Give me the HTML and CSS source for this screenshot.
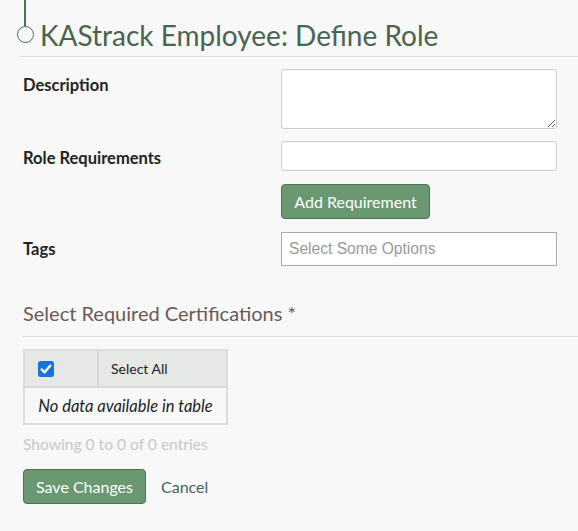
FILE: index.html
```html
<!DOCTYPE html>
<html>
<head>
<meta charset="utf-8">
<link rel="stylesheet" href="styles.css">
</head>
<body>
<div class="page">
  <header class="title-bar">
    <span class="timeline-dot"></span>
    <h1 class="title">KAStrack Employee: Define Role</h1>
  </header>

  <form class="form">
    <div class="row row-desc">
      <label class="label">Description</label>
      <div class="field"><textarea class="textarea"></textarea></div>
    </div>
    <div class="row row-req">
      <label class="label">Role Requirements</label>
      <div class="field">
        <input class="input" type="text">
        <button type="button" class="btn btn-add">Add Requirement</button>
      </div>
    </div>
    <div class="row row-tags">
      <label class="label">Tags</label>
      <div class="field"><div class="select">Select Some Options</div></div>
    </div>

    <h2 class="section-title">Select Required Certifications *</h2>

    <table class="table">
      <thead>
        <tr>
          <th class="th-check"><span class="checkbox"><svg viewBox="0 0 16 16" width="16" height="16"><rect x="0" y="0" width="16" height="16" rx="2.5" fill="#1a73d9"/><path d="M3.6 8.4 L6.6 11.3 L12.4 4.6" fill="none" stroke="#fff" stroke-width="2.3" stroke-linecap="round" stroke-linejoin="round"/></svg></span></th>
          <th class="th-all">Select All</th>
        </tr>
      </thead>
      <tbody>
        <tr><td colspan="2" class="empty">No data available in table</td></tr>
      </tbody>
    </table>

    <div class="info">Showing 0 to 0 of 0 entries</div>

    <div class="actions">
      <button type="button" class="btn btn-save">Save Changes</button>
      <a class="cancel">Cancel</a>
    </div>
  </form>
</div>
</body>
</html>
```

FILE: styles.css
```css
* { box-sizing: border-box; }
html, body { margin: 0; padding: 0; }
body {
  background: #f8f8f8;
  font-family: "Source Sans Pro", Lato, "Open Sans", sans-serif;
  color: #222;
}
.page { width: 578px; }

.title-bar {
  position: relative;
  margin-left: 20px;
  padding-top: 19px;
  height: 57px;
  border-bottom: 1px solid #dcdcdc;
}
.timeline-dot {
  position: absolute;
  left: -3px;
  top: 26px;
  width: 17px;
  height: 17px;
  border: 1.5px solid #4e6e55;
  border-radius: 50%;
}
.timeline-dot::before {
  content: "";
  position: absolute;
  left: 5.5px;
  top: -28px;
  width: 2px;
  height: 26.5px;
  background: #4e6e55;
}
.title {
  margin: 0 0 0 20px;
  font-size: 28px;
  line-height: 32px;
  font-weight: 400;
  color: #4a6450;
}

.form { padding-left: 23px; }
.row {
  display: grid;
  grid-template-columns: 258px 276px;
}
.label {
  font-size: 16.5px;
  font-weight: 700;
  line-height: 20px;
  color: #222;
}
.row-desc { margin-top: 12px; }
.row-desc .label { padding-top: 6px; }
.row-req { margin-top: 12px; }
.row-req .label { padding-top: 7px; }
.row-tags { margin-top: 13px; }
.row-tags .label { padding-top: 7px; }

.textarea {
  display: block;
  width: 276px;
  height: 60px;
  border: 1px solid #cccccc;
  border-radius: 3px;
  background: #fff;
  resize: vertical;
  margin: 0;
}
.input {
  display: block;
  width: 276px;
  height: 30px;
  border: 1px solid #cccccc;
  border-radius: 3px;
  background: #fff;
  margin: 0;
}
.select {
  width: 276px;
  height: 34px;
  border: 1px solid #aaaaaa;
  background: #fff;
  font-family: "Liberation Sans", Arial, sans-serif;
  font-size: 15.6px;
  line-height: 32px;
  color: #999;
  padding-left: 7px;
}

.btn {
  font-family: inherit;
  display: inline-block;
  background: #6a9870;
  border: 1px solid #4d7353;
  border-radius: 4px;
  color: #fff;
  font-size: 16px;
  height: 35px;
  padding: 0 12px;
  cursor: pointer;
}
.btn-add {
  margin-top: 13px;
  width: 149px;
  padding: 0;
}

.section-title {
  margin: 34px 0 0 0;
  font-size: 20px;
  font-weight: 400;
  line-height: 26px;
  color: #6b5a56;
  padding-bottom: 10px;
  border-bottom: 1px solid #dcdcdc;
}

.table {
  margin-top: 12px;
  border-collapse: collapse;
  border: 2px solid #dadddb;
  width: 205px;
  font-size: 15px;
}
.table th {
  background: #e5e8e5;
  font-weight: 400;
  height: 37px;
  text-align: left;
  border-bottom: 2px solid #d6d9d6;
}
.th-check {
  width: 74px;
  padding: 0 0 0 13px;
  border-right: 2px solid #d6d9d6;
}
.checkbox { display: block; width: 16px; height: 16px; }
.checkbox svg { display: block; }
.th-all { padding-left: 12px; font-size: 14px; }
.empty {
  font-style: italic;
  text-align: center;
  height: 37px;
  font-size: 16.5px;
  padding: 0;
}

.info {
  margin-top: 9px;
  font-size: 15.6px;
  line-height: 20px;
  color: #c8c8c8;
}

.actions {
  margin-top: 15px;
  display: flex;
  align-items: center;
}
.btn-save { width: 123px; padding: 0; }
.cancel {
  margin-left: 15px;
  font-size: 16px;
  color: #3f6463;
}
```
